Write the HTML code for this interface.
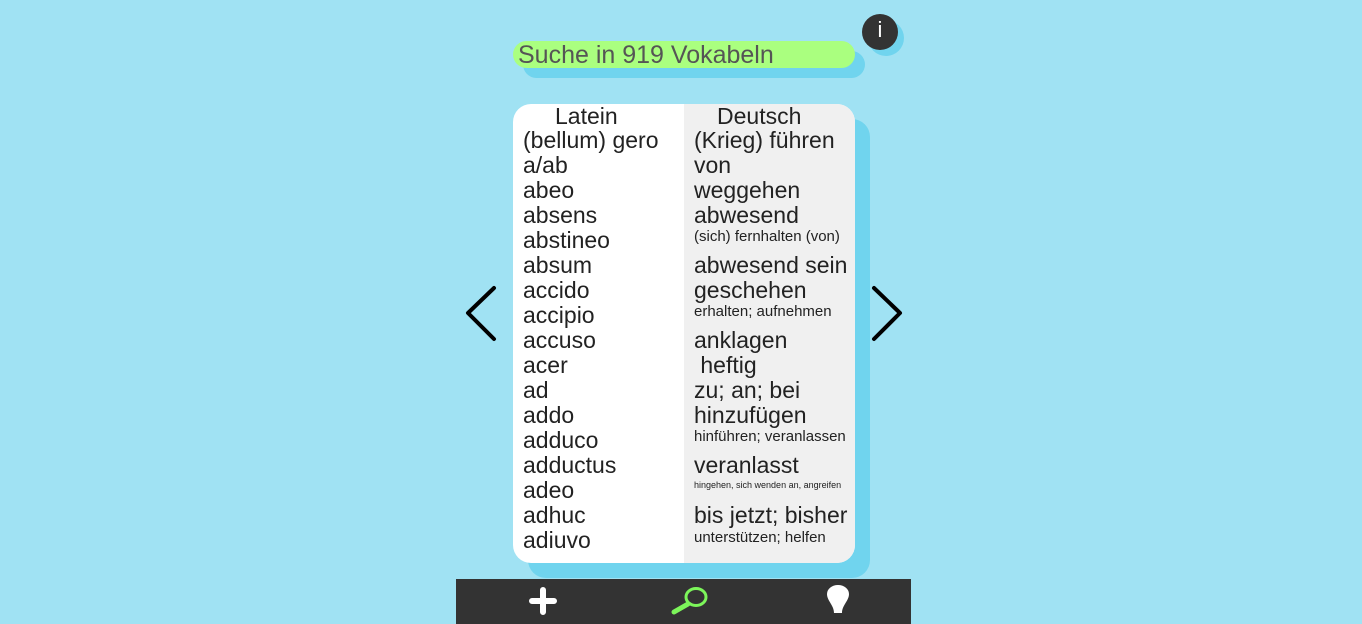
<!DOCTYPE html>
<html><head><meta charset="utf-8"><style>
body{margin:0;width:1362px;height:624px;background:#a0e2f3;position:relative;overflow:hidden;font-family:"Liberation Sans",Arial,sans-serif;color:#222}
.a{position:absolute}
.row{position:absolute;font-size:23px;line-height:25px;white-space:nowrap}
.s{font-size:15px;line-height:18px}
.t{font-size:9px;line-height:12px}
</style></head><body>
<div class="a" style="left:523px;top:51px;width:342px;height:27px;border-radius:14px;background:#70d4ee"></div>
<div class="a" style="left:513px;top:41px;width:342px;height:27px;border-radius:14px;background:#aaff7f"></div>
<div class="a" style="left:518px;top:42px;font-size:25px;line-height:27px;color:#555">Suche in 919 Vokabeln</div>
<div class="a" style="left:868px;top:20px;width:36px;height:36px;border-radius:50%;background:#70d4ee"></div>
<div class="a" style="left:862px;top:14px;width:36px;height:36px;border-radius:50%;background:#333;color:#fff;font-size:22px;line-height:32px;text-align:center">i</div>
<div class="a" style="left:528px;top:119px;width:342px;height:459px;border-radius:18px;background:#70d4ee"></div>
<div class="a" style="left:513px;top:104px;width:342px;height:459px;border-radius:18px;background:#fff;overflow:hidden">
<div class="a" style="left:171px;top:0;width:171px;height:459px;background:#f0f0f0"></div>
</div>
<div class="row" style="left:555px;top:104px">Latein</div>
<div class="row" style="left:717px;top:104px">Deutsch</div>
<div class="a" style="left:523px;top:128px">
<div class="row" style="top:0">(bellum) gero</div>
<div class="row" style="top:25px">a/ab</div>
<div class="row" style="top:50px">abeo</div>
<div class="row" style="top:75px">absens</div>
<div class="row" style="top:100px">abstineo</div>
<div class="row" style="top:125px">absum</div>
<div class="row" style="top:150px">accido</div>
<div class="row" style="top:175px">accipio</div>
<div class="row" style="top:200px">accuso</div>
<div class="row" style="top:225px">acer</div>
<div class="row" style="top:250px">ad</div>
<div class="row" style="top:275px">addo</div>
<div class="row" style="top:300px">adduco</div>
<div class="row" style="top:325px">adductus</div>
<div class="row" style="top:350px">adeo</div>
<div class="row" style="top:375px">adhuc</div>
<div class="row" style="top:400px">adiuvo</div>
</div>
<div class="a" style="left:694px;top:128px">
<div class="row" style="top:0">(Krieg) führen</div>
<div class="row" style="top:25px">von</div>
<div class="row" style="top:50px">weggehen</div>
<div class="row" style="top:75px">abwesend</div>
<div class="row s" style="top:100px">(sich) fernhalten (von)</div>
<div class="row" style="top:125px">abwesend sein</div>
<div class="row" style="top:150px">geschehen</div>
<div class="row s" style="top:175px">erhalten; aufnehmen</div>
<div class="row" style="top:200px">anklagen</div>
<div class="row" style="top:225px">&nbsp;heftig</div>
<div class="row" style="top:250px">zu; an; bei</div>
<div class="row" style="top:275px">hinzufügen</div>
<div class="row s" style="top:300px">hinführen; veranlassen</div>
<div class="row" style="top:325px">veranlasst</div>
<div class="row t" style="top:351px">hingehen, sich wenden an, angreifen</div>
<div class="row" style="top:375px">bis jetzt; bisher</div>
<div class="row s" style="top:401px">unterstützen; helfen</div>
</div>
<svg class="a" style="left:0;top:0" width="1362" height="624">
<polyline points="494,288 468,313 494,339" fill="none" stroke="#000" stroke-width="4" stroke-linecap="round" stroke-linejoin="round"/>
<polyline points="874,288 900,313 874,339" fill="none" stroke="#000" stroke-width="4" stroke-linecap="round" stroke-linejoin="round"/>
<rect x="456" y="579" width="455" height="45" fill="#333"/>
<path d="M543 590v22M532 601h22" stroke="#fff" stroke-width="6" stroke-linecap="round"/>
<ellipse cx="696" cy="597" rx="10" ry="8.5" fill="none" stroke="#7cf55a" stroke-width="3"/>
<path d="M688 604l-14 8" stroke="#7cf55a" stroke-width="5" stroke-linecap="round"/>
<path d="M834 613c0-8-7-12-7-19a11 9 0 0 1 22 0c0 7-7 11-7 19z" fill="#fff"/>
</svg>
</body></html>
